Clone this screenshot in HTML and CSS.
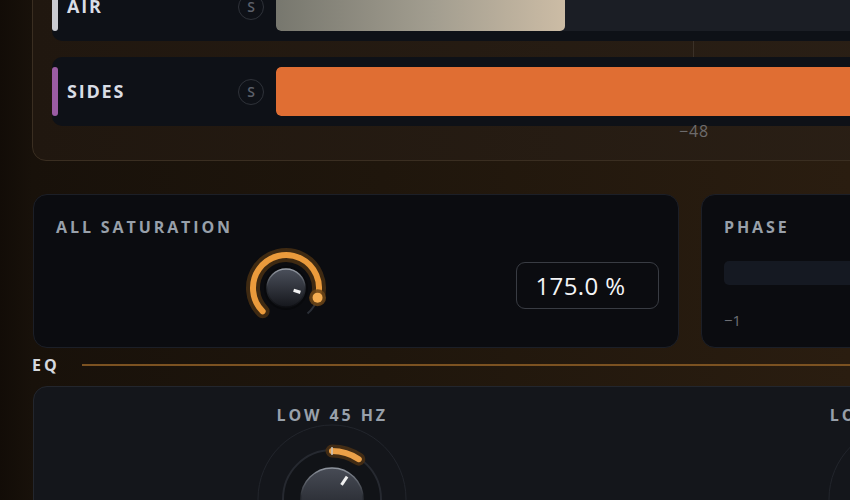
FILE: index.html
```html
<!DOCTYPE html>
<html lang="en">
<head>
  <meta charset="UTF-8">
  <title>Saturator</title>
  <link rel="stylesheet" href="styles.css">
</head>
<body>
  <div class="rack">

    <!-- Band meters -->
    <section class="meters">
      <div class="lanes">
        <div class="lane">
          <span class="strip strip-air"></span>
          <span class="lane-name">AIR</span>
          <span class="solo">S</span>
          <div class="track"><div class="fill fill-air" style="width: 289px"></div></div>
        </div>
        <div class="lane">
          <span class="strip strip-sides"></span>
          <span class="lane-name">SIDES</span>
          <span class="solo">S</span>
          <div class="track"><div class="fill fill-sides" style="width: 100%"></div></div>
        </div>
      </div>
      <div class="scale"><span>&minus;48</span></div>
    </section>

    <!-- Global controls -->
    <div class="cards">
      <section class="card sat">
        <h3 class="label">ALL SATURATION</h3>
        <div class="sat-body">
          <div class="knob-cell">
            <svg class="knob" width="90" height="90" viewBox="0 0 90 90">
              <defs>
                <linearGradient id="capFill" x1="0" y1="0" x2="0" y2="1">
                  <stop offset="0" stop-color="#4b505b"/>
                  <stop offset="1" stop-color="#15171c"/>
                </linearGradient>
                <linearGradient id="capRim" x1="0" y1="0" x2="0" y2="1">
                  <stop offset="0" stop-color="#9aa0aa"/>
                  <stop offset="0.5" stop-color="#2a2d34"/>
                  <stop offset="1" stop-color="#0d0e12"/>
                </linearGradient>
              </defs>
              <!-- rest of the range -->
              <path d="M76.56 54.65 A33 33 0 0 1 66.5 70.5" fill="none" stroke="#2b2f37" stroke-width="2"/>
              <!-- value arc with its glow -->
              <path d="M21.67 68.33 A33 33 0 1 1 76.56 54.65" fill="none" stroke="#3f2a12" stroke-width="14" stroke-linecap="round"/>
              <path d="M21.67 68.33 A33 33 0 1 1 76.56 54.65" fill="none" stroke="#eb9b3c" stroke-width="6" stroke-linecap="round"/>
              <circle cx="76.56" cy="54.65" r="8.5" fill="#6a4418" opacity="0.85"/>
              <circle cx="76.56" cy="54.65" r="5" fill="#f4ad52"/>
              <!-- cap -->
              <circle cx="45" cy="45" r="22" fill="#08090c"/>
              <circle cx="45" cy="45" r="19" fill="url(#capFill)" stroke="url(#capRim)" stroke-width="1.5"/>
              <line x1="52.6" y1="47.3" x2="59.4" y2="49.4" stroke="#f2f2f2" stroke-width="3.2"/>
            </svg>
          </div>
          <div class="readout">175.0 %</div>
        </div>
      </section>

      <section class="card phase">
        <h3 class="label">PHASE</h3>
        <div class="phase-bar"></div>
        <div class="phase-min">&minus;1</div>
      </section>
    </div>

    <!-- EQ -->
    <div class="eq-head">
      <span class="eq-title">EQ</span>
      <span class="rule"></span>
    </div>

    <section class="eq">
      <div class="band">
        <h3 class="label">LOW 45 HZ</h3>
        <svg class="eq-knob" width="160" height="160" viewBox="0 0 160 160">
          <defs>
            <linearGradient id="eqCap" x1="0" y1="0" x2="0" y2="1">
              <stop offset="0" stop-color="#474b55"/>
              <stop offset="1" stop-color="#181a1f"/>
            </linearGradient>
            <linearGradient id="eqRim" x1="0" y1="0" x2="0" y2="1">
              <stop offset="0" stop-color="#8e949e"/>
              <stop offset="0.45" stop-color="#2c2f36"/>
              <stop offset="1" stop-color="#0e0f13"/>
            </linearGradient>
          </defs>
          <circle cx="80" cy="80" r="74" fill="none" stroke="#22252c" stroke-width="1"/>
          <circle cx="80" cy="80" r="49" fill="#111317" stroke="#262930" stroke-width="2"/>
          <path d="M80 32 A48 48 0 0 1 106.8 40.2" fill="none" stroke="#4a3014" stroke-width="13" stroke-linecap="round" opacity="0.85"/>
          <path d="M80 32 A48 48 0 0 1 106.8 40.2" fill="none" stroke="#eba048" stroke-width="6" stroke-linecap="round"/>
          <line x1="80" y1="28" x2="80" y2="36" stroke="#c9c6bf" stroke-width="1.5"/>
          <circle cx="80" cy="80" r="31" fill="url(#eqCap)" stroke="url(#eqRim)" stroke-width="1.5"/>
          <line x1="89.5" y1="65.9" x2="95.1" y2="57.6" stroke="#f0f0f0" stroke-width="3"/>
        </svg>
      </div>
      <div class="band">
        <h3 class="label">LOW MID 1.2K</h3>
        <svg class="eq-knob" width="160" height="160" viewBox="0 0 160 160">
          <circle cx="80" cy="80" r="74" fill="none" stroke="#22252c" stroke-width="1"/>
          <circle cx="80" cy="80" r="49" fill="#111317" stroke="#262930" stroke-width="2"/>
          <circle cx="80" cy="80" r="31" fill="url(#eqCap)" stroke="url(#eqRim)" stroke-width="1.5"/>
        </svg>
      </div>
    </section>

  </div>
</body>
</html>
```

FILE: styles.css
```css
* {
  box-sizing: border-box;
}

html, body {
  margin: 0;
  padding: 0;
  height: 100%;
  overflow: hidden;
}

body {
  font-family: "Open Sans", "DejaVu Sans", sans-serif;
  color: #d8dce4;
  background: linear-gradient(90deg, #120c07 0, #18110a 32px, #1f160c 45%, #2a1d10 100%);
}

.rack {
  width: 1000px;
  margin-top: -40px;
  padding-left: 32px;
}

h3 {
  margin: 0;
}

.label {
  font-size: 16px;
  line-height: 18px;
  font-weight: 700;
  letter-spacing: 2.9px;
  color: #98a0aa;
}

/* Meters panel */
.meters {
  background: linear-gradient(90deg, #20170f, #2b2016);
  border: 1px solid #3a2e21;
  border-radius: 0 0 0 14px;
  padding: 11px 0 0 19px;
}

.lanes {
  display: flex;
  flex-direction: column;
  gap: 16px;
  /* -48 dB grid line, seen between lanes */
  background: linear-gradient(#3b3128, #3b3128) no-repeat 641px 0 / 1px 100%;
}

.lane {
  display: flex;
  align-items: center;
  height: 69px;
  padding: 10px 0;
  background: #0e1117;
  border-radius: 10px;
}

.strip {
  width: 6px;
  align-self: stretch;
  border-radius: 3px;
}

.strip-air {
  background: #cacbd1;
}

.strip-sides {
  background: #9b5ca3;
}

.lane-name {
  width: 171px;
  margin-left: 9px;
  margin-bottom: 1px;
  font-size: 18px;
  font-weight: 700;
  letter-spacing: 1.8px;
  color: #d9dde5;
}

.solo {
  width: 26px;
  height: 26px;
  border: 1.5px solid #2e3239;
  border-radius: 50%;
  display: flex;
  align-items: center;
  justify-content: center;
  font-size: 14px;
  font-weight: 600;
  color: #5c606a;
}

.track {
  flex: 1;
  align-self: stretch;
  margin-left: 12px;
  background: #1b1e25;
  border-radius: 5px 0 0 5px;
  overflow: hidden;
}

.fill {
  height: 100%;
  border-radius: 5px;
}

.fill-air {
  background: linear-gradient(90deg, #77776e, #a39e90 55%, #ccbca5);
}

.fill-sides {
  background: #e06e33;
  border-radius: 5px 0 0 5px;
}

.scale {
  height: 34px;
  padding-left: 627px;
  font-size: 16px;
  line-height: 11px;
  letter-spacing: 0.8px;
  color: #6d6b6c;
}

/* Cards row */
.cards {
  display: flex;
  gap: 22px;
  margin-top: 33px;
  padding-left: 1px;
}

.card {
  height: 154px;
  background: #0b0c10;
  border: 1px solid #1c1f27;
  border-radius: 14px;
  padding: 23px 19px 0 22px;
}

.sat {
  width: 646px;
}

.phase {
  flex: 1;
}

.sat-body {
  display: grid;
  grid-template-columns: 1fr 143px;
  align-items: center;
  margin-top: 7px;
}

.knob-cell {
  display: flex;
  justify-content: center;
}

.knob {
  display: block;
}

.readout {
  height: 47px;
  margin-bottom: 5px;
  padding-right: 14px;
  border: 1.5px solid #393c43;
  border-radius: 9px;
  display: flex;
  align-items: center;
  justify-content: center;
  font-size: 24px;
  letter-spacing: 0.4px;
  color: #f4f5f7;
}

.phase-bar {
  height: 24px;
  margin-top: 25px;
  background: #151922;
  border-radius: 5px 0 0 5px;
}

.phase-min {
  margin-top: 27px;
  font-size: 15px;
  line-height: 16px;
  color: #6d7076;
}

/* EQ section */
.eq-head {
  display: flex;
  align-items: center;
  height: 34px;
  margin-bottom: 4px;
}

.eq-title {
  font-size: 16px;
  font-weight: 700;
  letter-spacing: 3px;
  color: #d5d8de;
}

.rule {
  flex: 1;
  height: 2px;
  margin-left: 22px;
  background: #7c5221;
}

.eq {
  display: flex;
  gap: 378px;
  height: 200px;
  margin-left: 1px;
  padding: 19px 0 0 202px;
  background: #14161b;
  border: 1px solid #23262d;
  border-radius: 14px;
}

.band {
  width: 200px;
  display: flex;
  flex-direction: column;
  align-items: center;
}

.eq-knob {
  display: block;
  margin-top: -5px;
}
```
